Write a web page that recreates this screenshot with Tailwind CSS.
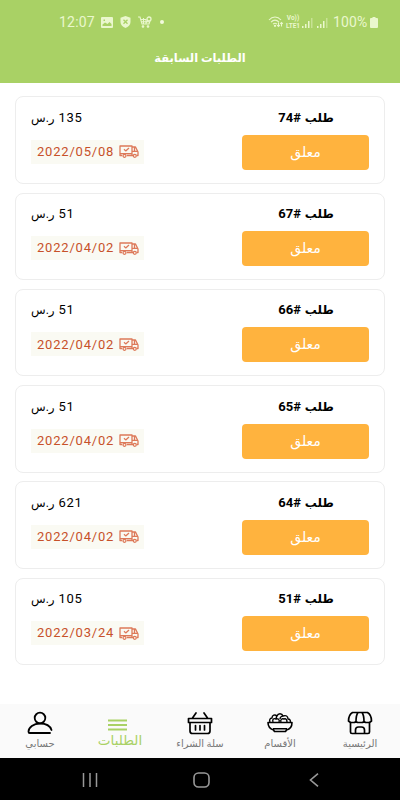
<!DOCTYPE html>
<html lang="ar" dir="rtl">
<head>
    <meta charset="UTF-8">
    <meta name="viewport" content="width=device-width, initial-scale=1.0">
    <title>الطلبات السابقة</title>
    <script src="https://cdn.jsdelivr.net/npm/@tailwindcss/browser@4"></script>
</head>
<body class="bg-white text-black font-[Roboto,'DejaVu_Sans',sans-serif]">
    <div class="w-[400px] h-[800px] flex flex-col overflow-hidden">
        <!-- Header -->
        <header class="h-[83px] shrink-0 bg-[#a9d165] pt-[13px]">
            <!-- Status bar -->
            <div dir="ltr" class="h-[18px] flex items-center justify-between pl-[59px] pr-[22px] text-[#eaf7cd]">
                <div class="flex items-center">
                    <span class="w-[42px] text-[14px] leading-[18px] tracking-[.2px]">12:07</span>
                    <svg class="w-[12px] h-[11px]" viewBox="0 0 12 11"><path fill="currentColor" fill-rule="evenodd" d="M1 0h10a1 1 0 0 1 1 1v9a1 1 0 0 1-1 1H1a1 1 0 0 1-1-1V1a1 1 0 0 1 1-1ZM1.500 9h9V7L8.500 5 6.500 7 4 5.500 1.500 7.500ZM2.500 2.500v1.500H4V2.500Z"/></svg>
                    <svg class="ml-[7px] w-[11px] h-[12px]" viewBox="0 0 11 12"><path fill="currentColor" d="M5.500 0 10.500 1.700V6c0 3-2.300 4.800-5 6-2.700-1.200-5-3-5-6V1.700Z"/><path stroke="#a9d165" stroke-width="1.300" d="m3.500 3.700 4 4m0-4-4 4"/></svg>
                    <svg class="ml-[7px] w-[14px] h-[12px]" viewBox="0 0 14 12" fill="none" stroke="currentColor" stroke-width="1.100"><path d="M0 1h2l2 7h7l1-3M2.700 3.500H8M3.500 5.800H11M5.500 2v6M8 3v5"/><circle cx="11" cy="3" r="2" stroke-width="1.300"/><path d="M9.500 5 8 6.500"/><circle cx="5" cy="10.500" r=".8" fill="currentColor"/><circle cx="10" cy="10.500" r=".8" fill="currentColor"/></svg>
                    <i class="ml-[8px] w-[4px] h-[4px] rounded-full bg-[#f2fadd]"></i>
                </div>
                <div class="flex items-center">
                    <svg class="w-[16px] h-[12px]" viewBox="0 0 16 12" fill="none" stroke="currentColor" stroke-width="1.100"><path d="M1 4c3.500-4 8.500-4 12 0M3 6.200c2.500-2.500 5.500-2.500 8 0M5 8.200c1.300-1.200 2.700-1.200 4 0"/><circle cx="7" cy="9.800" r=".6" fill="currentColor"/><path d="M10.500 6.500v4m-1.300-1.300 1.300 1.300 1.300-1.300M13.500 10.500v-4m-1.300 1.300 1.300-1.300 1.300 1.300"/></svg>
                    <div class="ml-[1px] w-[16px] flex flex-col items-center text-[6.500px] leading-[8px] font-bold whitespace-nowrap">
                        <span>Vo))</span>
                        <span>LTE1</span>
                    </div>
                    <svg class="ml-[1px] w-[11px] h-[11px]" viewBox="0 0 11 11"><path fill="currentColor" d="M0 9h1.500v2H0ZM3 7h1.500v4H3ZM6 4h1.500v7H6Z"/><path fill="currentColor" opacity=".45" d="M9 1h1.500v10H9Z"/></svg>
                    <svg class="ml-[4px] w-[11px] h-[11px]" viewBox="0 0 11 11"><path fill="currentColor" d="M0 9h1.500v2H0ZM3 7h1.500v4H3ZM6 4h1.500v7H6Z"/><path fill="currentColor" opacity=".45" d="M9 1h1.500v10H9Z"/></svg>
                    <span class="ml-[5px] w-[37px] text-[14px] leading-[18px] tracking-[.1px]">100%</span>
                    <svg class="w-[8px] h-[11px]" viewBox="0 0 8 11"><path fill="currentColor" d="M2.500 0h3v1H7a1 1 0 0 1 1 1v8a1 1 0 0 1-1 1H1a1 1 0 0 1-1-1V2a1 1 0 0 1 1-1h1.500Z"/></svg>
                </div>
            </div>
            <h1 class="mt-[17px] text-center text-[11.500px] leading-[20px] font-bold text-white">الطلبات السابقة</h1>
        </header>

        <!-- Orders list -->
        <main id="orders" class="flex-1 flex flex-col gap-[8.750px] pl-[14.500px] pr-[15px] pt-[13.250px]"></main>

        <!-- Bottom tabs -->
        <nav class="h-[54px] shrink-0 bg-[#fafafa] grid grid-cols-5 text-[10px] leading-[14px] text-[#777]">
            <a class="flex flex-col items-center pt-[7px]">
                <svg class="w-[26px] h-[24px]" viewBox="0 0 26 24" fill="none" stroke="black" stroke-width="1.700" stroke-linejoin="round"><path d="M5.500 1.500h15c2.500 1.500 4 4.500 4 8.500l-2 1.500h-4L17 10.500l-1.500 1h-5L9 10.500l-1.500 1h-4l-2-1.500c0-4 1.500-7 4-8.500ZM11 1.500C9.500 3.500 9 7 9 10.500M15 1.500c1.500 2 2 5.500 2 9M3.500 12v9c0 1 .5 1.500 1.500 1.500h16c1 0 1.500-.5 1.500-1.500v-9M8.500 22.500V19c0-2 1.500-3 3-3h3c1.500 0 3 1 3 3v3.500"/></svg>
                <span class="mt-[2px]">الرئيسية</span>
            </a>
            <a class="flex flex-col items-center pt-[7px]">
                <svg class="w-[26px] h-[24px]" viewBox="0 0 26 24" fill="none" stroke="black" stroke-width="1.600" stroke-linejoin="round"><path d="M1 11.500h24c0 4-2.500 6.800-5.500 7.500l-1 1.500h-11L6.500 19C3.500 18 1 15.500 1 11.500ZM6 17.800h14"/><path stroke-width="1.400" d="M3 11c-1-2 0-4 2-4 0-3 3-4 5-2 1-3 5-3 6 0 3-1 5 0 5 3 2 0 3 2 2 3M6 11c-1-3 1-4 3-3 2-1 4 1 3 3M14 11c-1-2 1-4 3-3 2-1 3 1 3 3M10 5c-1 1-1 2 0 3M13 8c0-2 2-3 3-3"/></svg>
                <span class="mt-[2px]">الأقسام</span>
            </a>
            <a class="flex flex-col items-center pt-[7px]">
                <svg class="w-[26px] h-[24px]" viewBox="0 0 26 24" fill="none" stroke="black" stroke-width="1.700" stroke-linejoin="round" stroke-linecap="round"><path d="M9 2 5.500 7M17 2l3.500 5M1.500 7.500h23v4h-23ZM3 11.500V20c0 1.500 1 2.500 2.500 2.500h15c1.500 0 2.500-1 2.500-2.500v-8.500M8.500 14.500v4.500M13 14.500v4.500M17.500 14.500v4.500"/></svg>
                <span class="mt-[2px] whitespace-nowrap">سلة الشراء</span>
            </a>
            <a class="flex flex-col items-center pt-[15px] text-[#a9d165]">
                <svg class="w-[19px] h-[12px] mr-[5px]" viewBox="0 0 19 12"><path stroke="currentColor" stroke-width="1.900" d="M0 1.500h19M0 6h19M0 10.500h19"/></svg>
                <span class="text-[13.500px] leading-[18px]">الطلبات</span>
            </a>
            <a class="flex flex-col items-center pt-[7px]">
                <svg class="w-[26px] h-[24px]" viewBox="0 0 26 24" fill="none" stroke="black" stroke-width="1.800" stroke-linecap="round" stroke-linejoin="round"><circle cx="13" cy="7" r="5.300"/><path d="M24.500 19c-1.500-4.500-6-6.500-11.500-6.500-6.500 0-11.500 4-11.500 8.200 0 .8.400 1.300 1.300 1.300H23"/></svg>
                <span class="mt-[2px]">حسابي</span>
            </a>
        </nav>

        <!-- Android buttons -->
        <div dir="ltr" class="h-[42px] shrink-0 bg-black flex items-center pl-[82px] pt-[2px]">
            <svg class="w-[16px] h-[14px]" viewBox="0 0 16 14" stroke="#999" stroke-width="1.500"><path d="M1.500 0v14M8 0v14M14.500 0v14"/></svg>
            <svg class="ml-[95px] w-[17px] h-[16px]" viewBox="0 0 17 16" fill="none" stroke="#999" stroke-width="1.600"><rect x="1" y="1" width="15" height="14" rx="4.500"/></svg>
            <svg class="ml-[99px] w-[10px] h-[14px]" viewBox="0 0 10 14" fill="none" stroke="#999" stroke-width="1.600"><path d="M9 .7 1.500 7 9 13.300"/></svg>
        </div>
    </div>

    <script>
        const orders = [
            { id: 74, price: 135, date: '2022/05/08' },
            { id: 67, price: 51, date: '2022/04/02' },
            { id: 66, price: 51, date: '2022/04/02' },
            { id: 65, price: 51, date: '2022/04/02' },
            { id: 64, price: 621, date: '2022/04/02' },
            { id: 51, price: 105, date: '2022/03/24' },
        ];

        document.getElementById('orders').innerHTML = orders.map(order => `
            <div class="h-[87.500px] shrink-0 flex justify-between border border-[#ededed] rounded-[8px] px-[15.500px] pt-[9.500px]">
                <div class="w-[127px]">
                    <div class="h-[22px] pl-[2px] flex justify-center items-center gap-[4px] font-bold leading-[22px]">
                        <span class="text-[12px]">طلب</span>
                        <span dir="ltr" class="text-[13px]">${order.id}#</span>
                    </div>
                    <div class="mt-[6px] h-[35px] pl-px rounded-[4px] bg-[#ffb33e] text-white text-[14px] leading-[34px] text-center">معلق</div>
                </div>
                <div dir="ltr">
                    <div class="h-[22px] flex items-center gap-[4px] leading-[22px]">
                        <span dir="rtl" class="text-[12px]">ر.س</span>
                        <span class="text-[13px] tracking-[.6px]">${order.price}</span>
                    </div>
                    <div class="mt-[11px] w-[113px] h-[24px] pl-[6px] flex items-center bg-[#fafaf3] text-[#c7512a]">
                        <span class="w-[82px] text-[13px] tracking-[.800px]">${order.date}</span>
                        <svg class="w-[20px] h-[13px]" viewBox="0 0 20 13" fill="none" stroke="#dd7959" stroke-width="1.300" stroke-linejoin="round"><path d="M3 10.500H1V1h12v9.500H8M13 2h3.500l2 4 .5 1v3.500h-1.200M13 10.500h1M1 8.700h12M13 6.300h5.500M15.500 2v4.300M5 4.300l1.700 1.600L10 3"/><circle cx="5.500" cy="10.800" r="1.500"/><circle cx="15.800" cy="10.800" r="1.500"/></svg>
                    </div>
                </div>
            </div>
        `).join('');
    </script>
</body>
</html>
